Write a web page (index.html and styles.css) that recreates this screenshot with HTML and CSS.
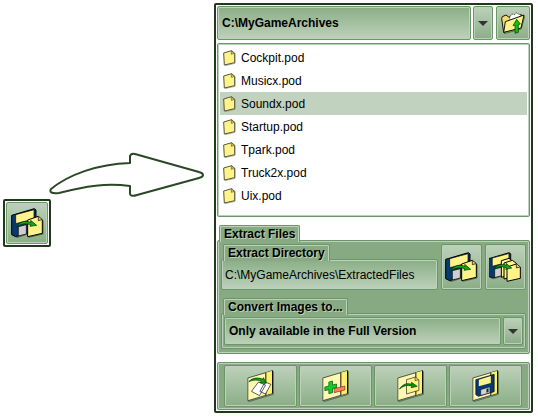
FILE: index.html
```html
<!DOCTYPE html>
<html lang="en">
<head>
<meta charset="utf-8">
<title>Archive extractor</title>
<link rel="stylesheet" href="styles.css">
</head>
<body>
<svg class="sprites" aria-hidden="true">
  <defs>
    <symbol id="file" viewBox="0 0 39 48">
      <path d="M6 47 L36 40 V11" fill="none" stroke="#8a8a80" stroke-width="2"/>
      <path d="M2 9 L26 2 L35 10 V38 L4 45 Z" fill="#fff38a" stroke="#55553c" stroke-width="3" stroke-linejoin="round"/>
      <path d="M25 3 V13 L35 10 Z" fill="#ddcf6a" stroke="#55553c" stroke-width="2"/>
    </symbol>
    <symbol id="plate" viewBox="0 0 80 96">
      <path d="M4 95 L79 73 V4" fill="none" stroke="#55714f" stroke-width="3"/>
      <path d="M2 24 L76 2 V70 L2 92 Z" fill="#fff8b4" stroke="#111" stroke-width="2"/>
      <path d="M56 8 L75 3 V69 L56 75 Z" fill="#fff06e"/>
      <path d="M56 8 V76 M76 2 V70" stroke="#111" stroke-width="3"/>
    </symbol>
    <symbol id="disk" viewBox="0 0 99 90">
      <path d="M16 89 L77 70" stroke="#4c684a" stroke-width="3"/>
      <path d="M2 22 L70 2 L75 6 V67 L14 86 L2 80 Z" fill="#083a70" stroke="#000" stroke-width="3" stroke-linejoin="round"/>
      <path d="M14 20 L69 5 V33 L14 47 Z" fill="#fff38a" stroke="#000" stroke-width="2"/>
      <path d="M22 56 L46 50 V78 L22 84 Z" fill="#cfcfcf" stroke="#000" stroke-width="2"/>
    </symbol>
    <symbol id="extract" viewBox="0 0 99 90">
      <use href="#disk" width="99" height="90"/>
      <path d="M53 88 L96 78 V38" fill="none" stroke="#4c684a" stroke-width="3"/>
      <path d="M50 36 L82 25 L94 35 V76 L50 86 Z" fill="#fff38a" stroke="#000" stroke-width="3" stroke-linejoin="round"/>
      <path d="M82 26 V38 L93 35" fill="#d8cb65" stroke="#000" stroke-width="2"/>
      <path d="M17 57 C26 40 44 37 60 43 L59 37 L77 52 L57 55 L59 50 C45 46 32 46 17 57 Z" fill="#0bad0b" stroke="#002a00" stroke-width="2"/>
    </symbol>
    <symbol id="extract-all" viewBox="0 0 99 90">
      <use href="#disk" width="90" height="82" x="-3"/>
      <g fill="#fff38a" stroke="#000" stroke-width="3" stroke-linejoin="round">
        <path d="M37 26 L60 19 L71 28 V66 L37 76 Z"/>
        <path d="M45 33 L70 25 L82 34 V71 L45 81 Z"/>
        <path d="M54 45 L82 36 L94 45 V79 L54 88 Z"/>
        <path d="M82 37 V48 L93 45" fill="#d8cb65" stroke-width="2"/>
      </g>
      <path d="M15 53 C24 37 38 35 52 40 L51 34 L68 48 L50 52 L52 47 C38 42 28 43 15 53 Z" fill="#0bad0b" stroke="#002a00" stroke-width="2"/>
    </symbol>
    <symbol id="folder-up" viewBox="0 0 72 66">
      <path d="M9 65 L61 51 L71 13" fill="none" stroke="#55714f" stroke-width="3"/>
      <path d="M8 61 L2 20 L4 14 L15 9 L23 15 L61 8 L60 45 Z" fill="#f2de70" stroke="#111" stroke-width="3"/>
      <path d="M25 18 L32 6 L41 8 L45 2 L54 7 L60 9 L55 18 L29 26 Z" fill="#fff" stroke="#222" stroke-width="2" stroke-dasharray="5 2"/>
      <path d="M8 61 L13 29 L69 9 L60 48 Z" fill="#fff08a" stroke="#111" stroke-width="3" stroke-linejoin="round"/>
      <path d="M47 22 L58 36 L52 38 V61 L42 64 V40 L36 41 Z" fill="#08c408" stroke="#003300" stroke-width="2"/>
    </symbol>
    <symbol id="copy" viewBox="0 0 80 96">
      <use href="#plate" width="80" height="96"/>
      <path d="M54 36 L71 43 L55 72 L38 64 Z M34 36 L55 45 L37 77 L13 64 Z" fill="#fff" stroke="#111" stroke-width="2"/>
      <path d="M5 35 C16 22 35 22 48 28 L49 23 L57 40 L38 38 L43 34 C31 29 18 29 5 35 Z" fill="#0aa80a" stroke="#003300" stroke-width="2"/>
    </symbol>
    <symbol id="edit" viewBox="0 0 80 96">
      <use href="#plate" width="80" height="96"/>
      <path d="M20 36 L31 33 V45 L43 42 V53 L31 56 V68 L20 71 V59 L8 62 V51 L20 48 Z" fill="#0bd02b" stroke="#064c06" stroke-width="2"/>
      <path d="M36 56 L68 48 V60 L36 68 Z" fill="#fa8260" stroke="#8a2c16" stroke-width="2"/>
    </symbol>
    <symbol id="import" viewBox="0 0 80 96">
      <use href="#plate" width="80" height="96"/>
      <path d="M28 29 L55 21 L65 30 V61 L28 72 Z" fill="#fff38a" stroke="#222" stroke-width="2"/>
      <path d="M54 21 V32 L64 29" fill="none" stroke="#222" stroke-width="2"/>
      <path d="M7 57 C16 42 30 38 44 43 L43 37 L60 49 L42 53 L44 48 C29 44 20 47 7 57 Z" fill="#0a9b0a" stroke="#003300" stroke-width="2"/>
    </symbol>
    <symbol id="save" viewBox="0 0 80 96">
      <use href="#plate" width="80" height="96"/>
      <path d="M11 29 L66 13 V65 L19 79 L11 74 Z" fill="#083a70" stroke="#000" stroke-width="2"/>
      <path d="M20 29 L56 18 V39 L20 49 Z" fill="#fff38a"/>
      <path d="M26 59 L53 51 V68 L26 76 Z" fill="#d4d4d4" stroke="#000" stroke-width="1"/>
      <path d="M43 57 L49 55 V66 L43 68 Z" fill="#222"/>
    </symbol>
    <symbol id="down" viewBox="0 0 10 5">
      <path d="M0 0 H10 L5 5 Z" fill="#333"/>
    </symbol>
  </defs>
</svg>

<main class="page">
  <div class="tile">
    <button class="btn tile-btn" type="button" aria-label="Extract"><svg class="icon-lg"><use href="#extract"/></svg></button>
  </div>

  <svg class="pointer" viewBox="0 0 156 46" aria-hidden="true">
    <path d="M2 37 C19 23 48 12 81 11 V4 Q82 1 86 2 L150 20 Q154 21 154 23 Q154 25 150 26 L88 43 Q82 45 81 42 V34 C57 31 37 34 10 41 Q-1 42 2 37 Z" fill="#fff" stroke="#2b4826" stroke-width="2" stroke-linejoin="round"/>
  </svg>

  <section class="window">
    <div class="path-row">
      <select class="combo" aria-label="Folder"><option>C:\MyGameArchives</option></select>
      <button class="btn drop" type="button" aria-label="Show folders"><svg class="icon-down"><use href="#down"/></svg></button>
      <button class="btn up" type="button" aria-label="Up one folder"><svg class="icon-up"><use href="#folder-up"/></svg></button>
    </div>

    <ul class="files">
      <li><svg class="icon-file"><use href="#file"/></svg>Cockpit.pod</li>
      <li><svg class="icon-file"><use href="#file"/></svg>Musicx.pod</li>
      <li class="selected"><svg class="icon-file"><use href="#file"/></svg>Soundx.pod</li>
      <li><svg class="icon-file"><use href="#file"/></svg>Startup.pod</li>
      <li><svg class="icon-file"><use href="#file"/></svg>Tpark.pod</li>
      <li><svg class="icon-file"><use href="#file"/></svg>Truck2x.pod</li>
      <li><svg class="icon-file"><use href="#file"/></svg>Uix.pod</li>
    </ul>

    <h2 class="tab">Extract Files</h2>
    <div class="group extract">
      <div class="directory-row">
        <div class="directory">
          <label class="tab" for="directory">Extract Directory</label>
          <input class="field" id="directory" type="text" value="C:\MyGameArchives\ExtractedFiles">
        </div>
        <button class="btn big" type="button" aria-label="Extract file"><svg class="icon-lg"><use href="#extract"/></svg></button>
        <button class="btn big" type="button" aria-label="Extract all files"><svg class="icon-lg"><use href="#extract-all"/></svg></button>
      </div>
      <label class="tab" for="convert">Convert Images to...</label>
      <div class="group convert">
        <select class="combo" id="convert"><option>Only available in the Full Version</option></select>
        <button class="btn drop" type="button" aria-label="Show formats"><svg class="icon-down"><use href="#down"/></svg></button>
      </div>
    </div>

    <div class="group toolbar">
      <button class="btn" type="button" aria-label="Copy"><svg class="icon-tool"><use href="#copy"/></svg></button>
      <button class="btn" type="button" aria-label="Add or remove"><svg class="icon-tool"><use href="#edit"/></svg></button>
      <button class="btn" type="button" aria-label="Import"><svg class="icon-tool"><use href="#import"/></svg></button>
      <button class="btn" type="button" aria-label="Save"><svg class="icon-tool"><use href="#save"/></svg></button>
    </div>
  </section>
</main>
</body>
</html>
```
FILE: styles.css
```css
:root {
  --frame: #1f3a1b;
  --base: #87aa82;
  --line: #6b9667;
  --light: #bcd1b9;
}

* { box-sizing: border-box; }

body {
  margin: 0;
  background: #fff;
  color: #000;
  font: 12px/16px "Liberation Sans", Arial, sans-serif;
}

button, select, input { font: inherit; color: inherit; margin: 0; }

svg { display: block; flex: none; }

.sprites { position: absolute; width: 0; height: 0; }

.page {
  display: flex;
  align-items: flex-start;
  padding: 3px 5px 5px 3px;
}

/* Shared double line: dark outside, light inside */
.btn, .combo, .field, .files, .group {
  border: 1px solid var(--line);
  border-radius: 2px;
  box-shadow: inset 0 0 0 1px var(--light);
}

.btn {
  display: flex;
  align-items: center;
  justify-content: center;
  padding: 0;
  background: linear-gradient(#bdd1ba, #8bae86);
}

.combo, .field {
  appearance: none;
  flex: 1;
  min-width: 0;
  padding: 0 3px;
  background: linear-gradient(#8bae86, #bdd1ba);
}

.combo { padding: 0 4px; font-weight: bold; }

.tile {
  flex: none;
  margin-top: 196px;
  padding: 1px;
  border: 2px solid var(--frame);
  border-radius: 2px;
}

.tile-btn { width: 42px; height: 42px; }

.pointer {
  width: 156px;
  height: 46px;
  margin: 149px 9px 0 -2px;
}

.window {
  flex: 1;
  min-width: 0;
  padding: 1px;
  border: 2px solid var(--frame);
  border-radius: 2px;
}

.path-row { display: flex; gap: 2px; height: 34px; }
.drop { width: 20px; }
.up { width: 34px; margin-left: 1px; }

.files {
  margin: 3px 0 8px;
  padding: 2px 2px 9px;
  list-style: none;
}

.files li {
  display: flex;
  align-items: center;
  gap: 5px;
  height: 23px;
  padding-left: 3px;
}

.files .selected { background: #c1d3be; }

.tab {
  position: relative;
  display: block;
  width: fit-content;
  height: 17px;
  margin: 0 0 -2px 2px;
  padding: 0 4px;
  border: 1px solid var(--line);
  border-bottom: 0;
  border-radius: 2px 2px 0 0;
  box-shadow: inset 1px 1px 0 var(--light), inset -1px 0 0 var(--light);
  background: var(--base);
  font: bold 12px/16px "Liberation Sans", Arial, sans-serif;
  text-shadow: 1px 1px 0 var(--light);
}

.group { background: var(--base); }

.extract { padding: 3px 3px 4px; }

.directory-row { display: flex; gap: 3px; margin-bottom: 8px; }
.directory { display: flex; flex-direction: column; flex: 1; min-width: 0; }
.big { width: 41px; height: 46px; }

.convert {
  display: flex;
  gap: 2px;
  padding: 3px 2px;
}

.convert .combo, .convert .drop { height: 28px; }

.toolbar {
  display: flex;
  gap: 2px;
  margin-top: 8px;
  padding: 2px 7px 2px 6px;
}

.toolbar .btn { flex: 1; height: 42px; }

.icon-file { width: 13px; height: 16px; }
.icon-down { width: 10px; height: 5px; }
.icon-up { width: 24px; height: 22px; }
.icon-lg { width: 33px; height: 30px; }
.icon-tool { width: 27px; height: 32px; }
```
